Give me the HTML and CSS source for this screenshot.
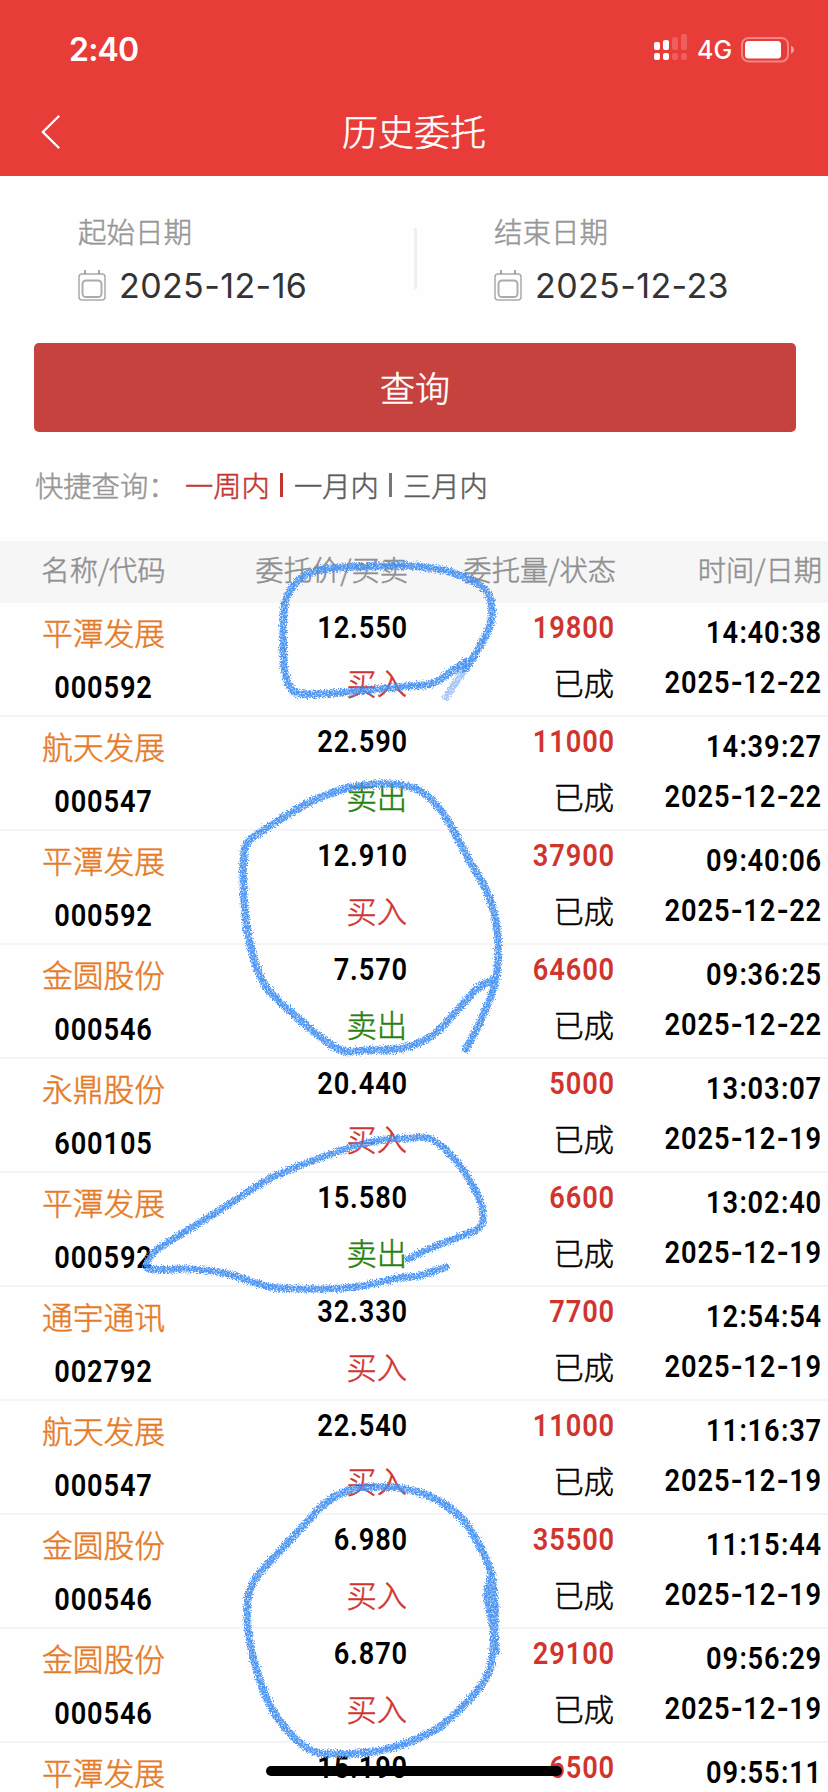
FILE: index.html
```html
<!DOCTYPE html>
<html lang="zh-CN">
<head>
<meta charset="utf-8">
<title>历史委托</title>
<link rel="stylesheet" href="styles.css">
</head>
<body>
<div class="screen">
  <header class="top">
    <div class="status">
      <span class="clock">2:40</span>
      <div class="status-right">
        <svg class="signal" width="34" height="28" viewBox="0 0 34 28" fill="#fff">
          <rect x="0" y="8" width="6" height="8" rx="2"/><rect x="9" y="6" width="6" height="10" rx="2"/>
          <rect x="0" y="19" width="6" height="7" rx="2"/><rect x="9" y="19" width="6" height="7" rx="2"/>
          <g opacity=".18"><rect x="18" y="3" width="6" height="13" rx="2"/><rect x="27" y="0" width="6" height="16" rx="2"/>
          <rect x="18" y="19" width="6" height="7" rx="2"/><rect x="27" y="19" width="6" height="7" rx="2"/></g>
        </svg>
        <span class="net">4G</span>
        <svg class="battery" width="54" height="26" viewBox="0 0 54 26">
          <rect x="1" y="1" width="46" height="23.4" rx="6.5" fill="none" stroke="#fff" stroke-opacity=".38" stroke-width="2"/>
          <rect x="4" y="4" width="36" height="17.4" rx="3.5" fill="#fff"/>
          <path d="M50 8.5 Q53 10 53 12.7 Q53 15.500 50 17z" fill="#fff" opacity=".5"/>
        </svg>
      </div>
    </div>
    <div class="nav">
      <svg class="back" width="20" height="34" viewBox="0 0 20 34" fill="none" stroke="#fff" stroke-width="2.4" stroke-linecap="round" stroke-linejoin="round"><path d="M17.500 1.500 L1.800 17 L17.500 32.500"/></svg>
      <h1 class="title">历史委托</h1>
    </div>
  </header>

  <section class="dates">
    <div class="date">
      <span class="date-label">起始日期</span>
      <div class="date-line">
        <svg class="cal" width="28" height="31" viewBox="0 0 28 31" fill="none" stroke="#aaa" stroke-width="1.5"><rect x="1" y="4" width="26" height="26" rx="3"/><rect x="4.500" y="10.500" width="19" height="16.500" rx="3.500" stroke-width="1.900"/><path d="M7 0v4M21 0v4" stroke="#888"/></svg>
        <span class="date-value">2025-12-16</span>
      </div>
    </div>
    <div class="split"></div>
    <div class="date">
      <span class="date-label">结束日期</span>
      <div class="date-line">
        <svg class="cal" width="28" height="31" viewBox="0 0 28 31" fill="none" stroke="#aaa" stroke-width="1.5"><rect x="1" y="4" width="26" height="26" rx="3"/><rect x="4.500" y="10.500" width="19" height="16.500" rx="3.500" stroke-width="1.900"/><path d="M7 0v4M21 0v4" stroke="#888"/></svg>
        <span class="date-value">2025-12-23</span>
      </div>
    </div>
  </section>

  <button class="query">查询</button>

  <div class="quick">
    <span class="quick-label">快捷查询：</span>
    <span class="quick-item active">一周内</span><i class="bar active"></i>
    <span class="quick-item">一月内</span><i class="bar"></i>
    <span class="quick-item">三月内</span>
  </div>

  <div class="thead">
    <span class="h-name">名称/代码</span>
    <span>委托价/买卖</span>
    <span>委托量/状态</span>
    <span>时间/日期</span>
  </div>
  <main class="rows" id="rows"></main>

  <svg class="ink" width="828" height="1792" viewBox="0 0 828 1792">
    <defs>
      <filter id="crayon" filterUnits="userSpaceOnUse" x="0" y="0" width="828" height="1792" color-interpolation-filters="sRGB">
        <feTurbulence type="fractalNoise" baseFrequency="0.83" numOctaves="3" seed="4" result="n"/>
        <feDisplacementMap in="SourceGraphic" in2="n" scale="7" xChannelSelector="R" yChannelSelector="G" result="rough"/>
        <feTurbulence type="fractalNoise" baseFrequency="0.61" numOctaves="2" seed="9"/>
        <feColorMatrix values="0 0 0 0 0  0 0 0 0 0  0 0 0 0 0  2.2 0 0 0 -0.2" result="grain"/>
        <feComposite in="rough" in2="grain" operator="in"/>
      </filter>
    </defs>
    <g id="strokes" filter="url(#crayon)"></g>
  </svg>
  <div class="home"></div>
</div>
<script src="app.js"></script>
</body>
</html>
```
FILE: styles.css
```css
* { box-sizing: border-box; }
body {
  margin: 0;
  background: #fff;
  font-family: "Inter", "Noto Sans CJK SC", sans-serif;
}
.screen {
  position: relative;
  width: 828px;
  height: 1792px;
  overflow: hidden;
  background: #fefefe;
}
.top { height: 176px; background: #e83c38; color: #fff; }
.status {
  height: 88px;
  padding: 11px 33px 0 69px;
  display: flex;
  align-items: center;
  justify-content: space-between;
}
.clock { font-size: 32px; font-weight: 600; letter-spacing: -.8px; }
.status-right { display: flex; align-items: center; }
.signal { margin-top: -3px; }
.net { font-size: 25px; font-weight: 450; width: 36px; margin: 0 8px 0 9px; padding-top: 1px; }
.nav { position: relative; height: 88px; display: flex; align-items: center; justify-content: center; }
.back { position: absolute; left: 41px; top: 27px; }
.title, .date-label, .query, .quick, .thead, .name, .han {
  font-family: "Noto Sans CJK SC", sans-serif;
  font-weight: 300;
  -webkit-text-stroke: .5px currentColor;
}
.title { margin: 0 0 5px; font-size: 36px; line-height: 50px; }

.dates { height: 167px; padding: 35px 0 0 78px; display: flex; }
.date { width: 336px; }
.split + .date { padding-left: 77px; }
.date-label { display: block; font-size: 28.5px; line-height: 40px; color: #979797; }
.date-line { display: flex; align-items: center; margin-top: 14px; height: 40px; }
.date-value { margin: 2px 0 0 13px; font-size: 34px; line-height: 40px; color: #333; letter-spacing: .4px; }
.cal { margin-top: 1px; }
.split { width: 3px; height: 61px; margin-top: 17px; background: #f0f0f0; }

.query {
  display: block;
  width: 762px;
  height: 89px;
  margin: 0 0 0 34px;
  padding: 0 0 2px;
  border: 0;
  border-radius: 5px;
  background: #c6423e;
  color: #fff;
  font-size: 35px;
  line-height: 86px;
}
.quick {
  height: 108px;
  padding: 0 0 2px 35px;
  display: flex;
  align-items: center;
  font-size: 28.3px;
  line-height: 40px;
  color: #5c5c5c;
}
.quick-label { width: 150px; color: #979797; white-space: nowrap; }
.quick .active { color: #c23532; }
.quick-item { width: 85px; }
.bar { width: 3px; height: 24px; margin: 0 11px 0 10px; background: #777; }
.bar.active { background: #c23532; }

.thead, .row {
  display: grid;
  grid-template-columns: 207px 201px 208px 206px;
  padding-right: 6px;
}
.thead {
  height: 62px;
  margin-top: 1px;
  background: #f6f6f6;
  color: #909090;
  font-size: 28.3px;
  line-height: 56px;
  text-align: right;
}
.thead .h-name { text-align: center; }
.row {
  height: 114px;
  border-bottom: 2px solid #f4f4f4;
  text-align: right;
  color: #000;
}
.cell { display: flex; flex-direction: column; }
.name-cell { text-align: center; padding-top: 9px; }
.price-cell, .qty-cell { padding: 5px 1px 0 0; }
.qty-cell { padding-right: 2px; }
.time-cell { padding-top: 10px; }
.name { font-size: 30.8px; line-height: 40px; color: #e67b27; }
.num {
  font: 600 31.5px/40px "Roboto", sans-serif;
  letter-spacing: 1px;
  transform: scaleX(.865);
  transform-origin: right;
  white-space: nowrap;
}
.name-cell .num { margin-top: 16px; transform-origin: center; }
.price-cell .num, .qty-cell .num { margin-right: -1px; }
.time-cell .num + .num { margin-top: 10px; }
.dash, .colon { display: inline-block; text-align: center; letter-spacing: 0; }
.dash { width: 15px; transform: scaleX(1.2); }
.colon { width: 10px; }
.han { font-size: 30.3px; line-height: 40px; margin-top: 14px; }
.buy, .qty { color: #d0342f; }
.sell { color: #27800f; }

.ink { position: absolute; left: 0; top: 0; fill: none; pointer-events: none; }
.home {
  position: absolute;
  left: 266px;
  top: 1766px;
  width: 296px;
  height: 10px;
  border-radius: 5px;
  background: #000;
}
```
FILE: app.js
```js
const orders = [
  ["平潭发展", "000592", "12.550", "买入", "19800", "14:40:38", "2025-12-22"],
  ["航天发展", "000547", "22.590", "卖出", "11000", "14:39:27", "2025-12-22"],
  ["平潭发展", "000592", "12.910", "买入", "37900", "09:40:06", "2025-12-22"],
  ["金圆股份", "000546", "7.570", "卖出", "64600", "09:36:25", "2025-12-22"],
  ["永鼎股份", "600105", "20.440", "买入", "5000", "13:03:07", "2025-12-19"],
  ["平潭发展", "000592", "15.580", "卖出", "6600", "13:02:40", "2025-12-19"],
  ["通宇通讯", "002792", "32.330", "买入", "7700", "12:54:54", "2025-12-19"],
  ["航天发展", "000547", "22.540", "买入", "11000", "11:16:37", "2025-12-19"],
  ["金圆股份", "000546", "6.980", "买入", "35500", "11:15:44", "2025-12-19"],
  ["金圆股份", "000546", "6.870", "买入", "29100", "09:56:29", "2025-12-19"],
  ["平潭发展", "", "15.190", "", "6500", "09:55:11", ""]
];
const sep = s => s.replace(/-/g, '<span class="dash">-</span>').replace(/:/g, '<span class="colon">:</span>');
document.getElementById("rows").innerHTML = orders.map(([name, code, price, side, qty, time, date]) => `
  <div class="row">
    <div class="cell name-cell"><span class="name">${name}</span><span class="num">${code}</span></div>
    <div class="cell price-cell"><span class="num">${price}</span><span class="han ${side === "买入" ? "buy" : "sell"}">${side}</span></div>
    <div class="cell qty-cell"><span class="num qty">${qty}</span><span class="han">${side && "已成"}</span></div>
    <div class="cell time-cell"><span class="num">${sep(time)}</span><span class="num">${sep(date)}</span></div>
  </div>`).join("");

// Hand-drawn pen strokes: point lists smoothed with Catmull-Rom segments.
const pen = [
  { w: 7.5, p: [[464,661],[447,673],[430,683],[408,685],[347,691],[303,693],[289,686],[283,663],[283,610],[290,588],[307,573],[333,567],[383,565],[410,565],[441,569],[468,578],[485,590],[491,605],[488,627],[475,652],[464,668]] },
  { w: 7.5, o: .5, p: [[468,662],[457,678],[445,696]] },
  { w: 7.5, p: [[465,1048],[478,1023],[493,987],[497,957],[496,927],[487,893],[467,857],[447,820],[430,798],[410,786],[380,783],[343,788],[307,802],[280,818],[250,838],[243,853],[243,897],[247,933],[257,970],[270,992],[297,1017],[337,1048],[367,1049],[403,1047],[433,1033],[460,1005],[477,987],[493,978]] },
  { w: 7, p: [[407,1258],[430,1247],[463,1234],[480,1225],[481,1207],[473,1187],[457,1162],[432,1139],[410,1137],[370,1141],[330,1153],[270,1177],[230,1202],[190,1227],[157,1248],[147,1260],[150,1268],[190,1268],[227,1273],[270,1286],[317,1288],[360,1285],[397,1277],[417,1275],[445,1266]] },
  { w: 7.5, p: [[495,1650],[491,1620],[486,1593],[490,1573],[480,1547],[463,1520],[443,1503],[417,1491],[387,1486],[353,1488],[327,1500],[307,1520],[277,1552],[255,1577],[247,1597],[247,1627],[253,1660],[267,1700],[287,1730],[315,1751],[360,1752],[397,1745],[437,1727],[470,1697],[487,1673],[492,1650],[494,1610],[491,1575]] }
];
const smooth = p => {
  let d = `M${p[0]}`;
  for (let i = 0; i < p.length - 1; i++) {
    const a = p[i - 1] || p[i], b = p[i], c = p[i + 1], e = p[i + 2] || c;
    d += `C${b[0] + (c[0] - a[0]) / 6},${b[1] + (c[1] - a[1]) / 6} ${c[0] - (e[0] - b[0]) / 6},${c[1] - (e[1] - b[1]) / 6} ${c}`;
  }
  return d;
};
document.getElementById("strokes").innerHTML = pen.map(s =>
  `<path d="${smooth(s.p)}" transform="translate(1 1)" stroke="#4590f2" stroke-opacity="${s.o || .95}" stroke-width="${s.w}" stroke-linecap="round" stroke-linejoin="round"/>`).join("");
```
